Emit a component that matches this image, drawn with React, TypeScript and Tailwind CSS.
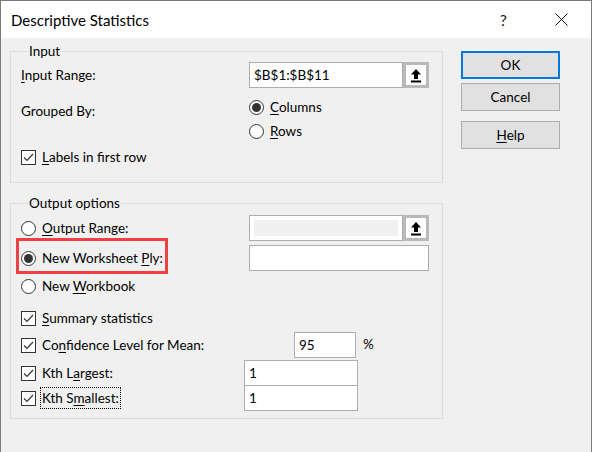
import type { ReactNode } from "react";

const font = { fontFamily: '"Segoe UI", Lato, "Noto Sans", sans-serif' };

function U({ children }: { children: ReactNode }) {
  return <span className="underline underline-offset-2">{children}</span>;
}

function Radio({ checked = false }: { checked?: boolean }) {
  return (
    <span className="flex h-[15px] w-[15px] shrink-0 items-center justify-center rounded-full border border-[#333333] bg-white">
      {checked && <span className="h-[9px] w-[9px] rounded-full bg-[#333333]" />}
    </span>
  );
}

function Check() {
  return (
    <span className="flex h-[15px] w-[15px] shrink-0 items-center justify-center border border-[#333333] bg-white">
      <svg width="11" height="9" viewBox="0 0 11 9" fill="none">
        <path d="M1 4.5 L4 7.5 L10 1" stroke="#333333" strokeWidth="1.2" />
      </svg>
    </span>
  );
}

function UploadButton() {
  return (
    <span className="flex h-[26px] w-[26px] shrink-0 items-center justify-center border-[3px] border-[#b9b9b9] bg-white">
      <svg width="12" height="15" viewBox="0 0 12 15">
        <path d="M6 1 L11 6.5 L8 6.5 L8 11 L4 11 L4 6.5 L1 6.5 Z" fill="#000" />
        <rect x="1" y="12.5" width="10" height="2" fill="#000" />
      </svg>
    </span>
  );
}

function TextBox({ w, value, children }: { w: string; value?: string; children?: ReactNode }) {
  return (
    <span className={`flex h-[26px] ${w} shrink-0 items-center border border-[#adadad] bg-white pl-[4px] text-black`}>
      {value}
      {children}
    </span>
  );
}

function DialogButton({ children, primary = false }: { children: ReactNode; primary?: boolean }) {
  return (
    <button
      type="button"
      className={`flex h-[28px] w-[99px] items-center justify-center bg-[#e1e1e1] text-black ${
        primary ? "border-2 border-[#0078d7]" : "border border-[#adadad]"
      }`}
    >
      {children}
    </button>
  );
}

export default function App() {
  return (
    <div style={font} className="flex h-[452px] w-[592px] flex-col border-x border-t border-[#7a7a7a] bg-[#f0f0f0] text-[13.5px] leading-[20px] text-black">
      {/* title bar */}
      <div className="flex h-[37px] shrink-0 items-center bg-white pl-[10px]">
        <span className="text-[15px]">Descriptive Statistics</span>
        <span className="ml-auto mr-[48px] text-[16px] text-[#222]">?</span>
        <svg className="mr-[23px]" width="13" height="13" viewBox="0 0 13 13">
          <path d="M0.5 0.5 L12.5 12.5 M12.5 0.5 L0.5 12.5" stroke="#111" strokeWidth="1" />
        </svg>
      </div>

      <div className="flex pl-[9px]">
        {/* left column */}
        <div className="flex w-[433px] flex-col">
          <fieldset className="mt-[3px] h-[142px] border border-[#dcdcdc] pl-[10px]">
            <legend className="ml-[7px] px-[1px] leading-[20px]">Input</legend>
            <div className="mt-[1px] flex h-[26px] items-center">
              <span className="w-[228px]">
                <U>I</U>nput Range:
              </span>
              <span className="flex">
                <TextBox w="w-[154px]" value="$B$1:$B$11" />
                <UploadButton />
              </span>
            </div>
            <div className="mt-[7px] flex">
              <span className="mt-[6px] w-[228px]">Grouped By:</span>
              <div className="flex flex-col">
                <div className="flex h-[24px] items-center gap-[6px]">
                  <Radio checked />
                  <span>
                    <U>C</U>olumns
                  </span>
                </div>
                <div className="flex h-[24px] items-center gap-[6px]">
                  <Radio />
                  <span>
                    <U>R</U>ows
                  </span>
                </div>
              </div>
            </div>
            <div className="mt-[2px] flex h-[24px] items-center gap-[6px]">
              <Check />
              <span>
                <U>L</U>abels in first row
              </span>
            </div>
          </fieldset>

          <fieldset className="mt-[10px] h-[226px] border border-[#dcdcdc] pl-[10px]">
            <legend className="ml-[7px] px-[1px] leading-[20px]">Output options</legend>
            <div className="mt-[2px] flex h-[26px] items-center">
              <span className="flex w-[228px] items-center gap-[6px]">
                <Radio />
                <span>
                  <U>O</U>utput Range:
                </span>
              </span>
              <span className="flex">
                <span className="flex h-[26px] w-[154px] items-center border border-[#adadad] bg-white px-[4px]">
                  <span className="h-[16px] w-full bg-[#f0f0f0]" />
                </span>
                <UploadButton />
              </span>
            </div>
            <div className="mt-[4px] flex h-[26px] items-center">
              <span className="relative flex w-[228px] items-center gap-[6px]">
                <Radio checked />
                <span>
                  New Worksheet <U>P</U>ly:
                </span>
                <span className="absolute left-[-5px] top-[-10px] h-[36px] w-[152px] border-[3px] border-[#ee4146]" />
              </span>
              <TextBox w="w-[180px]" />
            </div>
            <div className="mt-[2px] flex h-[26px] items-center gap-[6px]">
              <Radio />
              <span>
                New <U>W</U>orkbook
              </span>
            </div>
            <div className="mt-[6px] flex h-[26px] items-center gap-[6px]">
              <Check />
              <span>
                <U>S</U>ummary statistics
              </span>
            </div>
            <div className="mt-[1px] flex h-[26px] items-center">
              <span className="flex w-[273px] items-center gap-[6px]">
                <Check />
                <span>
                  Co<U>n</U>fidence Level for Mean:
                </span>
              </span>
              <TextBox w="w-[62px]" value="95" />
              <span className="ml-[7px] -mt-[3px]">%</span>
            </div>
            <div className="mt-[2px] flex h-[26px] items-center">
              <span className="flex w-[223px] items-center gap-[6px]">
                <Check />
                <span>
                  Kth L<U>a</U>rgest:
                </span>
              </span>
              <TextBox w="w-[114px]" value="1" />
            </div>
            <div className="-mt-px flex h-[26px] items-center">
              <span className="flex w-[223px] items-center gap-[4px]">
                <Check />
                <span className="border border-dotted border-black px-px">
                  Kth S<U>m</U>allest:
                </span>
              </span>
              <TextBox w="w-[114px]" value="1" />
            </div>
          </fieldset>
        </div>

        {/* right column */}
        <div className="ml-[18px] mt-[13px] flex flex-col">
          <DialogButton primary>OK</DialogButton>
          <div className="mt-[4px]">
            <DialogButton>Cancel</DialogButton>
          </div>
          <div className="mt-[10px]">
            <DialogButton>
              <U>H</U>elp
            </DialogButton>
          </div>
        </div>
      </div>
    </div>
  );
}
